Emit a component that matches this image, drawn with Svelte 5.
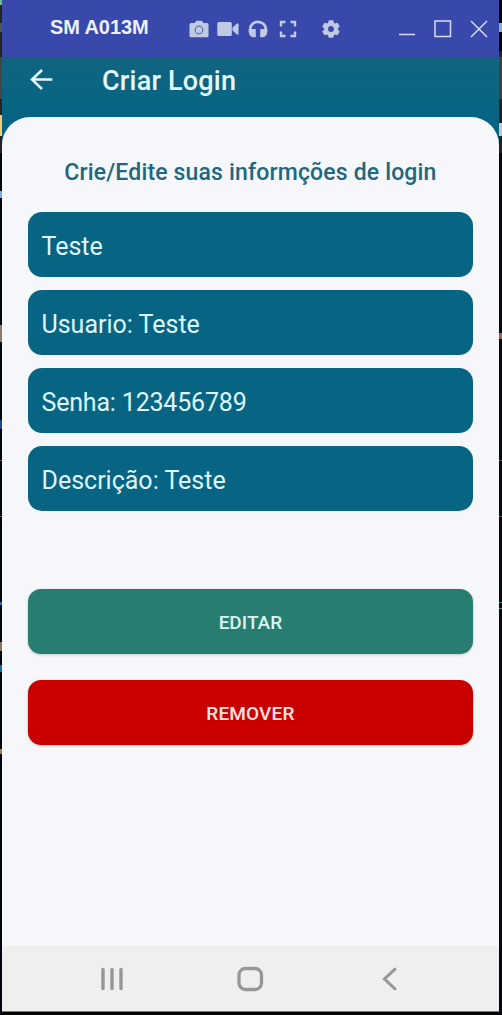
<script>
  const fields = ['Teste', 'Usuario: Teste', 'Senha: 123456789', 'Descrição: Teste'];
  const teeth = [0, 60, 120, 180, 240, 300];
</script>

<div class="desktop">
  <div class="edge left"></div>
  <div class="phone">
    <div class="titlebar">
      <span class="device">SM A013M</span>
      <div class="tools">
        <svg class="camera" width="20" height="18" viewBox="0 0 20 18">
          <path fill="currentColor" d="M2 3h3.600l1.800-2.300h5.200L14.400 3H18q1.500 0 1.500 1.500v11.200q0 1.500-1.500 1.500H2q-1.500 0-1.500-1.500V4.500Q.5 3 2 3z" />
          <circle cx="10" cy="10" r="3.800" fill="none" stroke="#5c6ab9" stroke-width="1.200" />
        </svg>
        <svg class="video" width="22" height="16" viewBox="0 0 22 16">
          <rect x="0.300" y="1" width="14.500" height="14" rx="1.500" fill="currentColor" />
          <path fill="currentColor" d="M15.500 6.500L20 2.500q1.500-.8 1.500.8v9.400q0 1.600-1.500.8l-4.500-4z" />
        </svg>
        <svg class="phones" width="20" height="18" viewBox="0 0 20 18">
          <path fill="none" stroke="currentColor" stroke-width="2.700" d="M2.100 12V9.500a7.900 7.700 0 0 1 15.800 0V12" />
          <path fill="currentColor" d="M.8 10q.4-1 2-1h5v8.200h-3Q.8 16 .8 12zM19.200 10q-.4-1-2-1h-5v8.200h3q4-1.200 4-5.200z" />
        </svg>
        <svg class="expand" width="18" height="18" viewBox="0 0 18 18">
          <path fill="none" stroke="currentColor" stroke-width="2.400" d="M2 6.500V2h4.500M11.500 2H16v4.500M16 11.500V16h-4.500M6.500 16H2v-4.500" />
        </svg>
        <svg class="gear" width="18" height="18" viewBox="-9 -9 18 18">
          {#each teeth as angle}
            <path fill="currentColor" transform="rotate({angle})" d="M-3.200-5L-2.200-8.800H2.200L3.200-5z" />
          {/each}
          <circle r="4.900" fill="none" stroke="currentColor" stroke-width="3.900" />
        </svg>
      </div>
      <div class="controls">
        <svg width="18" height="18" viewBox="0 0 18 18"><path d="M1 14.500h16" /></svg>
        <svg width="18" height="18" viewBox="0 0 18 18"><path d="M1 1h15.500v15.500H1z" /></svg>
        <svg width="18" height="18" viewBox="0 0 18 18"><path d="M1 1l16 16M17 1L1 17" /></svg>
      </div>
    </div>

    <div class="screen">
      <header>
        <svg width="24" height="22" viewBox="0 0 24 22">
          <path fill="none" stroke="#e4f8fc" stroke-width="2.500" d="M12 1L2 10.500l10 9.500M2 10.500H22.300" />
        </svg>
        <h1>Criar Login</h1>
      </header>
      <main>
        <h2>Crie/Edite suas informções de login</h2>
        <div class="fields">
          {#each fields as field}
            <div class="field" class:numeric={/\d/.test(field)}>{field}</div>
          {/each}
        </div>
        <button class="edit">EDITAR</button>
        <button class="remove">REMOVER</button>
      </main>
    </div>

    <nav>
      <svg width="24" height="26" viewBox="0 0 24 26"><path stroke-width="3.400" stroke-linecap="round" d="M3 3.500v19M12 3.500v19M21 3.500v19" /></svg>
      <svg class="home" width="28" height="26" viewBox="0 0 28 26"><rect x="3" y="2.500" width="22.500" height="21" rx="6.500" stroke-width="3.300" /></svg>
      <svg width="18" height="26" viewBox="0 0 18 26"><path stroke-width="3" stroke-linecap="round" d="M14 3.200L3.500 13 14 22.800" /></svg>
    </nav>
  </div>
  <div class="edge right"></div>
</div>

<style>
  :global(body) { background: #000; }
  .desktop {
    display: grid;
    grid-template-columns: 2px 497px 3px;
    height: 1015px;
    overflow: hidden;
    font-family: Roboto, sans-serif;
  }
  .left {
    background: linear-gradient(#6fb78d 0 5px, #252525 5px 23px, #555 23px 32px, #252525 32px 57px,
      #454545 57px 99px, #242424 99px 115px, #f1cf73 115px 136px, #242424 136px 153px,
      #00060b 153px 191px, #7eaee0 191px 198px, #00060b 198px 325px, #8b7b6c 325px 342px,
      #00060b 342px 420px, #24498c 420px 429px, #00060b 429px 460px, #6c6252 460px 461px,
      #00060b 461px 516px, #6c6252 516px 517px, #00060b 517px 602px, #276bc2 602px 605px,
      #00060b 605px 642px, #897764 642px 651px, #00060b 651px 665px, #1768a5 665px 672px,
      #00060b 672px 749px, #ae7852 749px 754px, #00060b 754px);
  }
  .right {
    background: linear-gradient(#000 0 23px, #88afc2 23px 32px, #000 32px 51px, #242424 51px 57px,
      #414141 57px 99px, #222 99px 123px, #c2c9d5 123px 136px, #222 136px 153px,
      #07080e 153px 333px, #98604b 333px 339px, #07080e 339px 460px, #6c6252 460px 461px,
      #07080e 461px 516px, #6c6252 516px 517px, #07080e 517px 602px, #47897a 602px 603px,
      #07080e 603px 608px, #47897a 608px 609px, #07080e 609px);
  }
  .phone {
    height: 1011px;
    display: flex;
    flex-direction: column;
    border-bottom: 1px solid #777;
    box-sizing: content-box;
  }
  .titlebar {
    height: 57px;
    flex: none;
    box-sizing: border-box;
    display: flex;
    align-items: center;
    padding: 0 11px 0 48px;
    background: #3949ab;
    color: #c1cae3;
  }
  .device {
    width: 139px;
    padding-bottom: 3px;
    font: bold 20px/24px "Liberation Sans", Arial, sans-serif;
    letter-spacing: -0.1px;
    color: #edf0fa;
  }
  .tools { display: flex; align-items: center; padding-top: 1px; }
  .video { margin-left: 8px; }
  .phones { margin-left: 9px; }
  .expand { margin-left: 11px; }
  .gear { margin-left: 25px; }
  .controls { display: flex; gap: 18px; margin-left: auto; }
  .controls path { fill: none; stroke: #d7dbf0; stroke-width: 1.5; }
  .screen {
    flex: 1;
    background: linear-gradient(#11647f 0, #076583 50px, #076583 88px, #f6f7fa 88px);
  }
  header {
    height: 60px;
    box-sizing: border-box;
    display: flex;
    align-items: center;
    padding: 0 28px 14px;
  }
  h1 {
    margin: 2px 0 0 48px;
    font-weight: 500;
    font-size: 27px;
    line-height: 32px;
    letter-spacing: 0.2px;
    color: #e4f8fc;
  }
  main {
    height: 829px;
    box-sizing: border-box;
    padding: 39px 26.500px 0 26.300px;
    background: #f6f7fa;
    border-radius: 28px 28px 0 0;
  }
  h2 {
    margin: 0;
    height: 56.400px;
    text-align: center;
    white-space: nowrap;
    font-weight: 500;
    font-size: 23px;
    line-height: 34px;
    letter-spacing: 0.16px;
    color: #20677f;
  }
  .fields { display: grid; gap: 13px; margin-bottom: 78px; }
  .field {
    height: 65px;
    box-sizing: border-box;
    padding: 1.700px 13.200px 0;
    border-radius: 14px;
    background: #076583;
    color: #dff5fb;
    font-size: 25px;
    line-height: 65px;
  }
  .numeric { letter-spacing: -0.18px; }
  button {
    display: block;
    width: 100%;
    height: 65px;
    margin: 0 0 26px;
    padding: 2px 0 0;
    border: 0;
    border-radius: 13px;
    font: 500 19px/24px Roboto, sans-serif;
    box-shadow: 0 1px 3px #0003;
  }
  .edit { background: #267d70; color: #dcf5f1; }
  .remove { background: #ca0000; color: #ffe5e5; letter-spacing: 0.15px; }
  nav {
    height: 65px;
    flex: none;
    display: flex;
    justify-content: space-between;
    align-items: center;
    box-sizing: border-box;
    padding: 0 100px 0 98px;
    background: #efefef;
  }
  nav svg { fill: none; stroke: #979797; }
  .home { margin-right: 5px; }
</style>
